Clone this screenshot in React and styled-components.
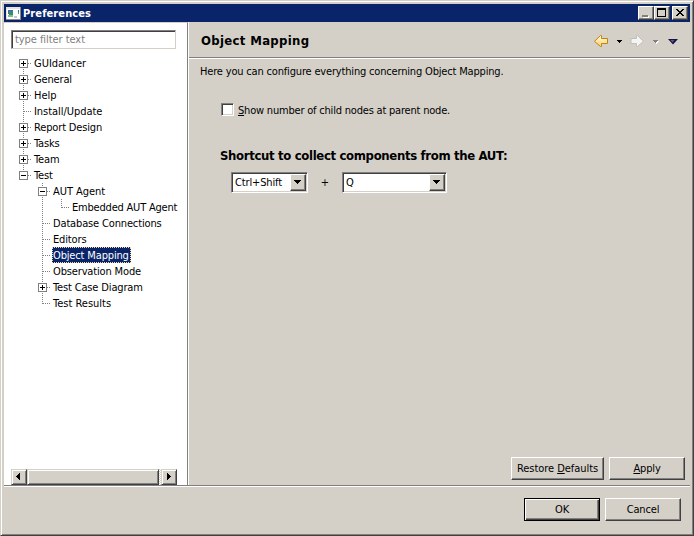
import React from 'react';
import styled, { createGlobalStyle, css } from 'styled-components';

const Global = createGlobalStyle`
  * { box-sizing: border-box; }
  body { margin: 0; background: #d4d0c8; overflow: hidden; }
  button { font: inherit; }
`;

const raised = css`
  border: 1px solid;
  border-color: #fff #404040 #404040 #fff;
  box-shadow: inset -1px -1px #808080;
`;
const sunken = css`
  border: 1px solid;
  border-color: #808080 #fff #fff #808080;
  box-shadow: inset 1px 1px #404040, inset -1px -1px #d4d0c8;
`;

const Label = styled.span`
  display: inline-block;
  white-space: pre;
  letter-spacing: ${(p) => p.$track ?? -0.15}px;
  u {
    text-underline-offset: 1px;
    text-decoration-thickness: 1px;
    text-decoration-skip-ink: none;
  }
`;

const Window = styled.div`
  width: 694px;
  height: 536px;
  padding: 3px;
  border: 1px solid;
  border-color: #d4d0c8 #404040 #404040 #d4d0c8;
  box-shadow: inset 1px 1px #fff, inset -1px -1px #808080;
  background: #d4d0c8;
  color: #000;
  font: 11px/16px 'DejaVu Sans Condensed', 'DejaVu Sans', sans-serif;
  font-stretch: condensed;
  display: flex;
  flex-direction: column;
`;
const TitleBar = styled.header`
  height: 18px;
  flex: none;
  display: flex;
  align-items: center;
  padding: 0 2px;
  background: #0a246a;
  color: #fff;
  font-weight: bold;
`;
const TitleText = styled.div`
  flex: 1;
  padding: 1px 0 0 2px;
`;
const CaptionButton = styled.button`
  ${raised}
  width: 16px;
  height: 14px;
  padding: 0;
  margin-left: ${(p) => p.$gap || 0}px;
  background: #d4d0c8;
  svg { display: block; }
`;
const Main = styled.div`
  display: flex;
  height: 463px;
  flex: none;
`;
const Sidebar = styled.aside`
  width: 184px;
  flex: none;
  border-right: 1px solid #808080;
  border-top: 1px solid #d4d0c8;
  background: #fff;
  padding: 7px 0 0 7px;
  display: flex;
  flex-direction: column;
`;
const Filter = styled.div`
  width: 165px;
  height: 19px;
  ${sunken}
  border-color: #808080 #d4d0c8 #d4d0c8 #808080;
  box-shadow: inset 1px 1px #404040;
  padding: 1px 3px;
  color: #808080;
`;
const Tree = styled.div`
  flex: 1;
  padding-top: 6px;
`;
const TreeRow = styled.div`
  display: flex;
  height: 16px;
  padding-left: 3px;
`;
const Guide = styled.svg`
  width: 19px;
  height: 16px;
  flex: none;
  display: block;
`;
const NodeText = styled.div`
  height: 16px;
  line-height: 18px;
  padding: 0 1px;
  ${(p) => p.$selected && css`
    background: #0a246a;
    color: #fff;
    outline: 1px dotted #f5db95;
    outline-offset: -1px;
    padding-right: 2px;
  `}
`;
const ScrollBar = styled.div`
  display: flex;
  width: 166px;
  height: 16px;
  background: repeating-conic-gradient(#fff 0 25%, #d4d0c8 0 50%) 0 0 / 2px 2px;
`;
const ScrollPart = styled.div`
  border: 1px solid;
  border-color: #d4d0c8 #404040 #404040 #d4d0c8;
  box-shadow: inset 1px 1px #fff, inset -1px -1px #808080;
  background: #d4d0c8;
  width: ${(p) => p.$w}px;
  height: 16px;
  margin-right: ${(p) => p.$gap || 0}px;
  svg { display: block; }
`;
const Page = styled.main`
  flex: 1;
  border-left: 1px solid #fff;
  display: flex;
  flex-direction: column;
`;
const PageHeader = styled.div`
  height: 36px;
  border-bottom: 1px solid #808080;
  box-shadow: 0 1px #fff;
  display: flex;
  align-items: center;
  justify-content: space-between;
  padding: 2px 12px 0 12px;
`;
const NavTools = styled.div`
  display: flex;
  align-items: center;
  svg { display: block; }
`;
const Heading = styled.h1`
  margin: 0;
  font-size: 13px;
  line-height: 18px;
  font-weight: bold;
`;
const PageBody = styled.div`
  flex: 1;
  padding: 6px 5px 5px 11px;
  display: flex;
  flex-direction: column;
`;
const CheckRow = styled.div`
  display: flex;
  align-items: flex-start;
  gap: 4px;
  height: 16px;
  margin: 23px 0 0 21px;
`;
const CheckBox = styled.div`
  width: 13px;
  height: 13px;
  background: #fff;
  ${sunken}
`;
const SubHeading = styled(Heading)`
  margin: 28px 0 0 20px;
`;
const ShortcutRow = styled.div`
  display: flex;
  align-items: center;
  margin: 7px 0 0 31px;
`;
const Combo = styled.div`
  width: ${(p) => p.$w}px;
  height: 21px;
  background: #fff;
  ${sunken}
  padding: 1px 1px 1px 3px;
  display: flex;
  justify-content: space-between;
  line-height: 18px;
`;
const ComboArrow = styled.div`
  width: 16px;
  height: 17px;
  background: #d4d0c8;
  ${raised}
  svg { display: block; }
`;
const Plus = styled.div`
  width: 34px;
  text-align: center;
  line-height: 18px;
`;
const ButtonRow = styled.div`
  display: flex;
  justify-content: flex-end;
  gap: 5px;
  margin-top: auto;
`;
const Footer = styled.footer`
  flex: 1;
  border-top: 1px solid #808080;
  box-shadow: inset 0 1px #fff;
  padding: 12px 9px 0;
`;
const PushButton = styled.button`
  ${raised}
  width: ${(p) => p.$w || 76}px;
  height: 23px;
  padding: 0;
  background: #d4d0c8;
  color: #000;
  line-height: 19px;
  ${(p) => p.$primary && css`
    border-color: #000;
    box-shadow: inset 1px 1px #fff, inset -1px -1px #404040, inset -2px -2px #808080;
  `}
`;

const nodes = [
  { name: 'GUIdancer', depth: 0, kind: 'plus', edge: 'first', track: 0 },
  { name: 'General', depth: 0, kind: 'plus' },
  { name: 'Help', depth: 0, kind: 'plus', track: 0 },
  { name: 'Install/Update', depth: 0, kind: 'leaf', track: -0.05 },
  { name: 'Report Design', depth: 0, kind: 'plus' },
  { name: 'Tasks', depth: 0, kind: 'plus' },
  { name: 'Team', depth: 0, kind: 'plus' },
  { name: 'Test', depth: 0, kind: 'minus', edge: 'last' },
  { name: 'AUT Agent', depth: 1, kind: 'minus', track: -0.05 },
  { name: 'Embedded AUT Agent', depth: 2, kind: 'leaf', edge: 'last', rail: true, track: -0.2 },
  { name: 'Database Connections', depth: 1, kind: 'leaf' },
  { name: 'Editors', depth: 1, kind: 'leaf' },
  { name: 'Object Mapping', depth: 1, kind: 'leaf' },
  { name: 'Observation Mode', depth: 1, kind: 'leaf' },
  { name: 'Test Case Diagram', depth: 1, kind: 'plus' },
  { name: 'Test Results', depth: 1, kind: 'leaf', edge: 'last', track: 0 },
];

function Branch({ kind, edge }) {
  return (
    <Guide viewBox="0 0 19 16" shapeRendering="crispEdges" fill="none" stroke="#808080">
      <path d={`M9.5 ${edge === 'first' ? 8 : 0}V${edge === 'last' ? 9 : 16}`} strokeDasharray="1 1" />
      <path d="M10 8.5H18" strokeDasharray="1 1" />
      {kind !== 'leaf' && <rect x="5.5" y="4.5" width="8" height="8" fill="#fff" />}
      {kind !== 'leaf' && <path d={kind === 'plus' ? 'M7 8.5h5M9.5 6v5' : 'M7 8.5h5'} stroke="#000" />}
    </Guide>
  );
}
function Rail({ line }) {
  return (
    <Guide viewBox="0 0 19 16" shapeRendering="crispEdges">
      {line && <path d="M9.5 0V16" stroke="#808080" strokeDasharray="1 1" />}
    </Guide>
  );
}
const DownTriangle = () => (
  <svg width="14" height="15" shapeRendering="crispEdges">
    <path d="M3 5h7v1h-1v1h-1v1h-1v1h-1v-1h-1v-1h-1v-1h-1z" />
  </svg>
);
const SideTriangle = ({ right }) => (
  <svg width="14" height="14" shapeRendering="crispEdges">
    <path
      transform={right ? 'translate(13 0) scale(-1 1)' : undefined}
      d="M4 6h1v-1h1v-1h1v-1h1v7h-1v-1h-1v-1h-1v-1h-1z"
    />
  </svg>
);
const WindowIcon = () => (
  <svg width="15" height="13" shapeRendering="crispEdges">
    <path fill="#8c8a84" d="M0 0h15v13H0z" />
    <path fill="#e4e2dc" d="M0 0h14v12H0z" />
    <path fill="#fff" d="M1 2h13v10H1z" />
    <path fill="#3a6ea5" d="M2 3h5v4H2z" />
    <path fill="#3c8c6c" d="M3 4h4v5H3z" />
    <path fill="#7fc08c" d="M2 8h5v2H2z" />
    <path fill="#3a6ea5" d="M12 3h1v2h-1z" />
    <path fill="#4fa860" d="M12 5h1v2h-1z" />
    <path fill="#c8c8d0" d="M8 9h3v2H8z" />
  </svg>
);

function Navigation() {
  return (
    <NavTools>
      <svg width="86" height="16" viewBox="592 33 86 16">
        <defs>
          <linearGradient id="gold" x1="0" y1="0" x2="0" y2="1">
            <stop offset="0" stopColor="#fffbe0" />
            <stop offset="1" stopColor="#f8d26a" />
          </linearGradient>
        </defs>
        <path
          d="M594.5 41.3L600.5 35.5H601.5V38.5H607.5V43.5H601.5V46.5H600.5Z"
          fill="url(#gold)" stroke="#c48212" strokeLinejoin="round"
        />
        <path d="M617 40h5v1h-1v1h-1v1h-1v-1h-1v-1h-1z" shapeRendering="crispEdges" />
        <path
          d="M643.5 41.3L637.5 35.5H636.5V38.5H631V43.5H636.5V46.5H637.5Z"
          fill="#f4f4f2" stroke="#c0beb8" strokeLinejoin="round"
        />
        <path d="M654 41h5v1h-1v1h-1v1h-1v-1h-1v-1h-1z" fill="#fff" shapeRendering="crispEdges" />
        <path d="M653 40h5v1h-1v1h-1v1h-1v-1h-1v-1h-1z" fill="#808080" shapeRendering="crispEdges" />
        <path d="M668 39h10l-5 5.5z" fill="#17143c" />
        <path d="M670.5 40h4l-2 2.4z" fill="#5c58a0" />
      </svg>
    </NavTools>
  );
}

export default function App() {
  return (
    <>
      <Global />
      <Window>
        <TitleBar>
          <WindowIcon />
          <TitleText><Label $track={0.1}>Preferences</Label></TitleText>
          <CaptionButton aria-label="Minimize">
            <svg width="14" height="12" shapeRendering="crispEdges">
              <path d="M4 9h6v2H4z" fill="#fff" /><path d="M3 8h6v2H3z" fill="#808080" />
            </svg>
          </CaptionButton>
          <CaptionButton aria-label="Maximize">
            <svg width="14" height="12" shapeRendering="crispEdges">
              <path d="M2 1h9v9H2zM3 3v6h7V3z" fillRule="evenodd" />
            </svg>
          </CaptionButton>
          <CaptionButton $gap={2} aria-label="Close">
            <svg width="14" height="12" shapeRendering="crispEdges">
              <path d="M3 2h2v1h1v1h2V3h1V2h2v1h-1v1H9v1H8v1h1v1h1v1h1v1H9V8H8V7H6v1H5v1H3V8h1V7h1V6h1V5H5V4H4V3H3z" />
            </svg>
          </CaptionButton>
        </TitleBar>
        <Main>
          <Sidebar>
            <Filter><Label $track={-0.06}>type filter text</Label></Filter>
            <Tree>
              {nodes.map(({ name, depth, kind, edge, rail, track }) => (
                <TreeRow key={name}>
                  {depth > 0 && <Rail />}
                  {depth > 1 && <Rail line={rail} />}
                  <Branch kind={kind} edge={edge} />
                  <NodeText $selected={name === 'Object Mapping'}>
                    <Label $track={track}>{name}</Label>
                  </NodeText>
                </TreeRow>
              ))}
            </Tree>
            <ScrollBar>
              <ScrollPart $w={16}><SideTriangle /></ScrollPart>
              <ScrollPart $w={132} $gap={2} />
              <ScrollPart $w={16}><SideTriangle right /></ScrollPart>
            </ScrollBar>
          </Sidebar>
          <Page>
            <PageHeader>
              <Heading><Label $track={0.33}>Object Mapping</Label></Heading>
              <Navigation />
            </PageHeader>
            <PageBody>
              <div><Label $track={-0.175}>Here you can configure everything concerning Object Mapping.</Label></div>
              <CheckRow>
                <CheckBox />
                <Label $track={-0.2}><u>S</u>how number of child nodes at parent node.</Label>
              </CheckRow>
              <SubHeading><Label $track={-0.34}>Shortcut to collect components from the AUT:</Label></SubHeading>
              <ShortcutRow>
                <Combo $w={77}><Label>Ctrl+Shift</Label><ComboArrow><DownTriangle /></ComboArrow></Combo>
                <Plus>+</Plus>
                <Combo $w={105}><Label>Q</Label><ComboArrow><DownTriangle /></ComboArrow></Combo>
              </ShortcutRow>
              <ButtonRow>
                <PushButton $w={93}><Label $track={-0.05}>Restore <u>D</u>efaults</Label></PushButton>
                <PushButton><Label><u>A</u>pply</Label></PushButton>
              </ButtonRow>
            </PageBody>
          </Page>
        </Main>
        <Footer>
          <ButtonRow>
            <PushButton $primary><Label>OK</Label></PushButton>
            <PushButton><Label>Cancel</Label></PushButton>
          </ButtonRow>
        </Footer>
      </Window>
    </>
  );
}
